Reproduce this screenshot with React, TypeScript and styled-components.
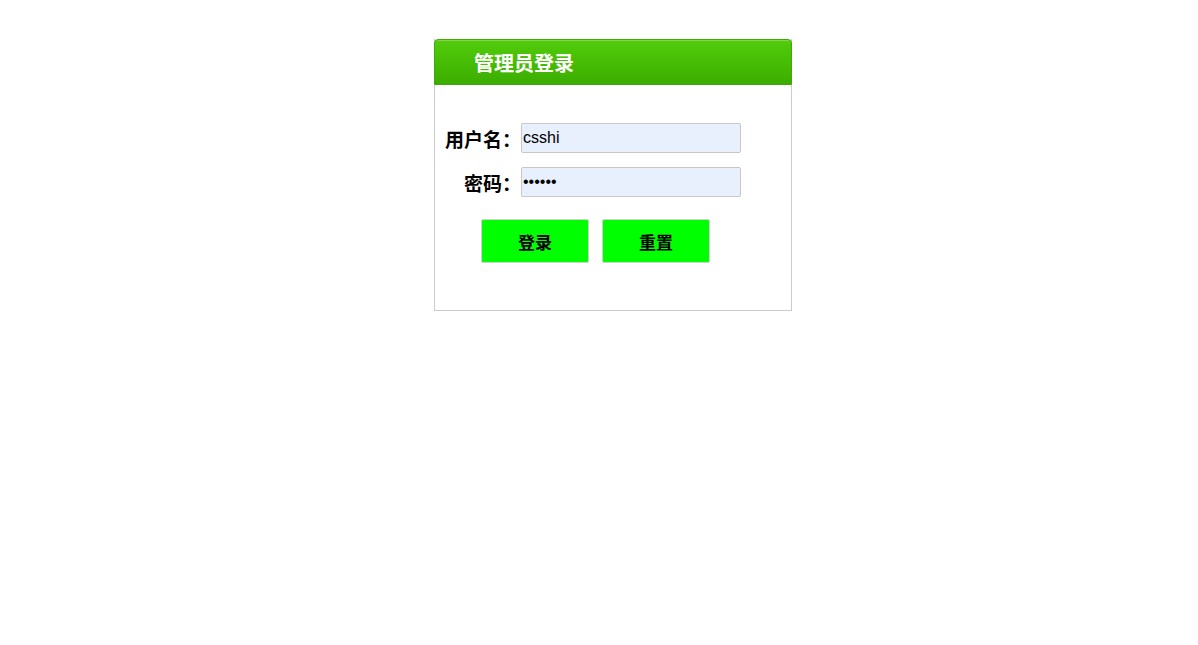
import styled, { createGlobalStyle } from 'styled-components'

const GlobalStyle = createGlobalStyle`
  html, body {
    margin: 0;
    padding: 0;
    background: #ffffff;
    font-family: 'Liberation Sans', 'Noto Sans CJK SC', sans-serif;
  }
`

export default function App() {
  return (
    <Page>
      <GlobalStyle />
      <LoginBox>
        <Header>
          <Title>管理员登录</Title>
        </Header>
        <Form onSubmit={(e) => e.preventDefault()}>
          <Row>
            <Label htmlFor='username'>用户名：</Label>
            <Input id='username' type='text' defaultValue='csshi' />
          </Row>
          <Row>
            <Label htmlFor='password'>密码：</Label>
            <Input id='password' type='password' defaultValue='123456' />
          </Row>
          <Buttons>
            <Button type='submit'>登录</Button>
            <Button type='reset'>重置</Button>
          </Buttons>
        </Form>
      </LoginBox>
    </Page>
  )
}

const Page = styled.div`
  padding-top: 39px;
  padding-left: 434px;
`

const LoginBox = styled.div`
  width: 356px;
  border: 1px solid #cccccc;
  border-top: none;
  background: #ffffff;
`

const Header = styled.div`
  margin: 0 -1px;
  height: 44px;
  display: flex;
  align-items: center;
  background: linear-gradient(to bottom, #52cc0b 0%, #47bd05 50%, #3cad00 100%);
  border: 1px solid #3fa80a;
  border-radius: 4px 4px 0 0;
  box-shadow: inset 0 1px 0 rgba(255, 255, 255, 0.25);
`

const Title = styled.h2`
  margin: 2px 0 0 39px;
  color: #ffffff;
  font-family: 'Noto Sans CJK SC', sans-serif;
  font-size: 20px;
  font-weight: 700;
  line-height: 1;
`

const Form = styled.form`
  padding: 38px 0 47px;
  display: flex;
  flex-direction: column;
  gap: 14px;
`

const Row = styled.div`
  display: grid;
  grid-template-columns: 86px 220px;
  column-gap: 0;
  align-items: center;
`

const Label = styled.label`
  text-align: right;
  color: #000000;
  font-family: 'Noto Sans CJK SC', sans-serif;
  font-size: 19px;
  font-weight: 700;
  white-space: nowrap;
`

const Input = styled.input`
  box-sizing: border-box;
  width: 220px;
  height: 30px;
  padding: 0 1px;
  border: 1px solid #c8c8c8;
  border-radius: 2px;
  background: #e8f0fe;
  color: #000000;
  font-family: 'Liberation Sans', sans-serif;
  font-size: 16px;
  outline: none;
`

const Buttons = styled.div`
  display: flex;
  gap: 13px;
  padding-left: 46px;
  margin-top: 8px;
`

const Button = styled.button`
  box-sizing: border-box;
  width: 108px;
  height: 44px;
  border: 1px solid #d0d0d0;
  border-radius: 2px;
  background: #00ff00;
  color: #000000;
  font-family: 'Noto Sans CJK SC', sans-serif;
  font-size: 17px;
  font-weight: 700;
  cursor: pointer;
`
